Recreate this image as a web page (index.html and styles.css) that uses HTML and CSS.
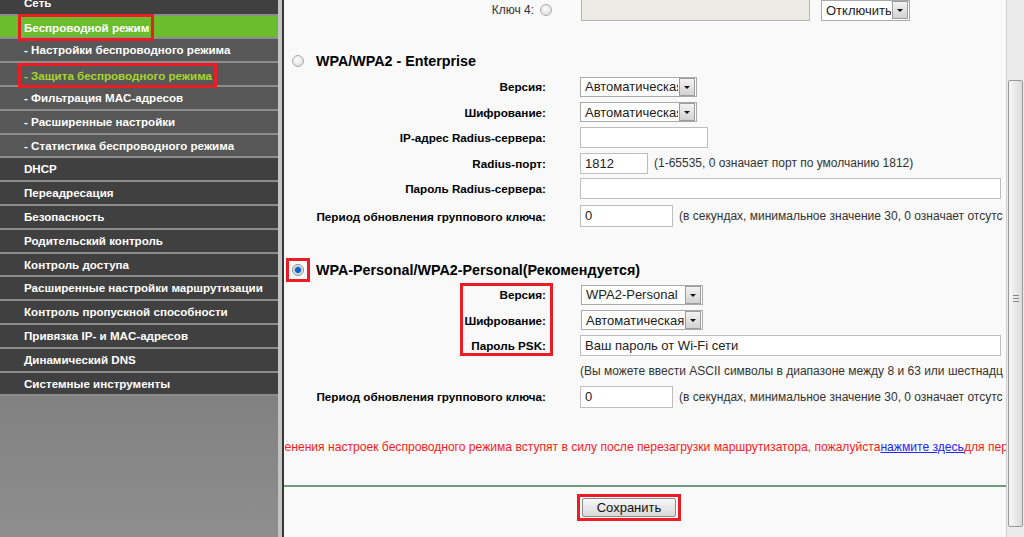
FILE: index.html
```html
<!DOCTYPE html>
<html lang="ru">
<head>
  <meta charset="UTF-8" />
  <title>Защита беспроводного режима</title>
  <link rel="stylesheet" href="styles.css">
</head>
<body>
  <div class="page">
    <nav class="menu">
      <a class="menu-item">Сеть</a>
      <a class="menu-item open"><span class="mark">Беспроводной режим</span></a>
      <a class="menu-item sub">- Настройки беспроводного режима</a>
      <a class="menu-item sub current"><span class="mark mark-sub">- Защита беспроводного режима</span></a>
      <a class="menu-item sub">- Фильтрация MAC-адресов</a>
      <a class="menu-item sub">- Расширенные настройки</a>
      <a class="menu-item sub">- Статистика беспроводного режима</a>
      <a class="menu-item">DHCP</a>
      <a class="menu-item">Переадресация</a>
      <a class="menu-item">Безопасность</a>
      <a class="menu-item">Родительский контроль</a>
      <a class="menu-item">Контроль доступа</a>
      <a class="menu-item">Расширенные настройки маршрутизации</a>
      <a class="menu-item">Контроль пропускной способности</a>
      <a class="menu-item">Привязка IP- и MAC-адресов</a>
      <a class="menu-item">Динамический DNS</a>
      <a class="menu-item">Системные инструменты</a>
    </nav>
    <div class="divider"></div>

    <main class="content">
      <div class="row key-row">
        <div class="label plain">Ключ 4: <span class="radio"></span></div>
        <div class="field">
          <span class="input disabled w-key"></span>
          <span class="select w-off"><span class="val">Отключить</span><span class="arrow"></span></span>
        </div>
      </div>

      <div class="section-title first"><span class="radio"></span>WPA/WPA2 - Enterprise</div>
      <div class="row">
        <div class="label">Версия:</div>
        <div class="field"><span class="select w-ver"><span class="val">Автоматическая</span><span class="arrow"></span></span></div>
      </div>
      <div class="row">
        <div class="label">Шифрование:</div>
        <div class="field"><span class="select w-ver"><span class="val">Автоматическая</span><span class="arrow"></span></span></div>
      </div>
      <div class="row">
        <div class="label">IP-адрес Radius-сервера:</div>
        <div class="field"><span class="input w-ip"></span></div>
      </div>
      <div class="row">
        <div class="label">Radius-порт:</div>
        <div class="field"><span class="input w-port">1812</span><span class="hint">(1-65535, 0 означает порт по умолчанию 1812)</span></div>
      </div>
      <div class="row">
        <div class="label">Пароль Radius-сервера:</div>
        <div class="field"><span class="input w-long"></span></div>
      </div>
      <div class="row period">
        <div class="label">Период обновления группового ключа:</div>
        <div class="field"><span class="input w-period">0</span><span class="hint">(в секундах, минимальное значение 30, 0 означает отсутствие обновления)</span></div>
      </div>

      <div class="section-title second"><span class="mark mark-radio"><span class="radio checked"></span></span>WPA-Personal/WPA2-Personal(Рекомендуется)</div>
      <div class="marked-group">
        <div class="row">
          <div class="label">Версия:</div>
          <div class="field shift"><span class="select w-psk"><span class="val">WPA2-Personal</span><span class="arrow"></span></span></div>
        </div>
        <div class="row">
          <div class="label">Шифрование:</div>
          <div class="field shift"><span class="select w-psk"><span class="val">Автоматическая</span><span class="arrow"></span></span></div>
        </div>
        <div class="row">
          <div class="label">Пароль PSK:</div>
          <div class="field"><span class="input w-long">Ваш пароль от Wi-Fi сети</span></div>
        </div>
      </div>
      <div class="row">
        <div class="label"></div>
        <div class="field"><span class="hint flush">(Вы можете ввести ASCII символы в диапазоне между 8 и 63 или шестнадцатеричные символы в диапазоне между 8 и 64.)</span></div>
      </div>
      <div class="row">
        <div class="label">Период обновления группового ключа:</div>
        <div class="field"><span class="input w-period">0</span><span class="hint">(в секундах, минимальное значение 30, 0 означает отсутствие обновления)</span></div>
      </div>

      <p class="note">Изменения настроек беспроводного режима вступят в силу после перезагрузки маршрутизатора, пожалуйста<a href="#">нажмите здесь</a>для перезагрузки.</p>

      <div class="actions">
        <span class="mark mark-btn"><button class="save">Сохранить</button></span>
      </div>
    </main>

    <div class="scrollbar"><div class="thumb"><span class="grip"></span></div></div>
  </div>
</body>
</html>
```

FILE: styles.css
```css
body {
  margin: 0;
  font-family: 'Liberation Sans', Arial, sans-serif;
  font-size: 12px;
  color: #000;
  background: #f9f9f9;
  overflow: hidden;
}
.page {
  display: flex;
  height: 537px;
  overflow: hidden;
}

/* menu */
.menu {
  width: 278px;
  flex: none;
  background: linear-gradient(#5c5c5c, #8e8e8e);
}
.menu-item {
  display: block;
  height: 21.8px;
  line-height: 21.8px;
  padding-left: 24px;
  border-bottom: 2px solid #8d8d8d;
  background: #404040;
  color: #fff;
  font-weight: bold;
  font-size: 11.6px;
  white-space: nowrap;
  text-decoration: none;
}
.menu-item:first-child { margin-top: -8.2px; }
.menu-item.sub { background: #575757; }
.menu-item.open { background: #6cbd2d; }
.menu-item.current { color: #a7d62c; }

.mark {
  position: relative;
  display: inline-block;
  border: 3px solid #ea1c24;
  padding: 3px 2px 3px 3px;
  margin: -6px 0 -6px -6px;
  line-height: 15px;
  vertical-align: middle;
}
.mark-sub {
  padding: 2px 2px 2px 3px;
  margin: -5px 0 -5px -6px;
}

.divider {
  width: 4px;
  flex: none;
  background: #c4c4c4;
  border-right: 2px solid #363636;
}

/* content */
.content {
  flex: 1;
  min-width: 0;
  overflow: hidden;
  background: #f9f9f9;
}
.row {
  display: flex;
  align-items: center;
  height: 25.5px;
  margin-right: 3px;
  overflow: hidden;
  white-space: nowrap;
}
.label {
  width: 262px;
  flex: none;
  text-align: right;
  font-weight: bold;
  font-size: 11.7px;
}
.label.plain {
  font-weight: normal;
  font-size: 12px;
  color: #333;
  display: flex;
  justify-content: flex-end;
  align-items: center;
  gap: 6px;
  width: 268px;
}
.field {
  display: flex;
  align-items: center;
  margin-left: 34px;
}
.field.shift { margin-left: 35px; }
.key-row {
  margin-top: -1px;
  height: 22px;
}
.key-row .field { margin-left: 29px; }

.section-title {
  display: flex;
  align-items: center;
  height: 24px;
  padding-left: 8px;
  font-weight: bold;
  font-size: 14.3px;
  white-space: nowrap;
}
.section-title .radio { margin-right: 12px; }
.section-title.first { margin-top: 28px; margin-bottom: 1px; }
.section-title.second { margin-top: 29px; padding-left: 2px; }
.mark-radio {
  padding: 3px;
  margin: 0 6px 0 0;
  line-height: 0;
}
.mark-radio .radio { margin: 0; }
.row.period { margin-top: 2px; }

.radio {
  display: inline-block;
  width: 12px;
  height: 12px;
  box-sizing: border-box;
  border-radius: 50%;
  border: 1px solid #ababab;
  background: radial-gradient(circle at 45% 40%, #fdfdfd, #d6d6d6);
}
.radio.checked {
  border-color: #8a8a8a;
  background: radial-gradient(circle, #0d63c8 0 2.5px, #7aa6d6 3.2px, #e9e9e9 4px);
}

.input {
  display: inline-block;
  box-sizing: border-box;
  height: 21px;
  line-height: 19px;
  padding: 0 4px;
  border: 1px solid #bdbdbd;
  background: #fff;
  font-size: 13px;
  color: #222;
}
.input.disabled {
  background: #ecebe6;
  border-color: #b4b4b4;
  height: 22px;
}
.w-key { width: 229px; }
.w-ip { width: 128px; }
.w-port { width: 68px; }
.w-long { width: 421px; }
.w-period { width: 93px; height: 22px; }

.select {
  display: inline-flex;
  align-items: center;
  box-sizing: border-box;
  height: 20px;
  border: 1px solid #a9a9a9;
  background: #fff;
  overflow: hidden;
}
.select .val {
  flex: 1;
  overflow: hidden;
  padding-left: 4px;
  font-size: 13px;
  color: #222;
}
.select .arrow {
  flex: none;
  position: relative;
  width: 14px;
  height: 16px;
  margin: 0 1px;
  border: 1px solid #9c9c9c;
  background: linear-gradient(#f3f3f3, #d2d2d2);
}
.select .arrow::after {
  content: '';
  position: absolute;
  left: 4px;
  top: 7px;
  border-left: 3px solid transparent;
  border-right: 3px solid transparent;
  border-top: 3px solid #111;
}
.w-off { width: 89px; margin-left: 11px; height: 21px; }
.w-ver { width: 117px; }
.w-psk { width: 122px; }

.hint {
  margin-left: 6px;
  color: #333;
}
.hint.flush { margin-left: 0; }

.marked-group { position: relative; }
.marked-group::after {
  content: '';
  position: absolute;
  left: 176px;
  top: 1px;
  width: 87px;
  height: 67px;
  border: 3px solid #ea1c24;
}

.note {
  margin: 29.5px 0 0 -22px;
  line-height: 16px;
  font-size: 12.1px;
  color: #ff1a1a;
  white-space: nowrap;
}
.note a { color: #2424ff; }

.actions {
  margin-top: 30px;
  border-top: 2px solid #6c9e79;
  padding: 7px 0 0 293px;
}
.mark-btn {
  margin: 0;
  padding: 1px 2px;
  line-height: normal;
}
.save {
  display: block;
  width: 94px;
  height: 19px;
  padding: 0;
  border: 1px solid #8c8c8c;
  border-radius: 2px;
  background: linear-gradient(#f7f7f7, #d9d9d9);
  font-family: 'Liberation Sans', Arial, sans-serif;
  font-size: 13px;
  color: #111;
}

/* scrollbar */
.scrollbar {
  width: 17px;
  flex: none;
  border-left: 1px solid #cfcfcf;
  background: #ebebeb;
}
.thumb {
  position: relative;
  margin: 80px 1px 0;
  height: 447px;
  box-sizing: border-box;
  border: 1px solid #999;
  border-radius: 2px;
  background: linear-gradient(90deg, #f6f6f6, #dcdcdc);
}
.grip {
  position: absolute;
  left: 4px;
  top: 214px;
  width: 6px;
  height: 5px;
  border-top: 1px solid #888;
  border-bottom: 1px solid #888;
  background: linear-gradient(#888, #888) center / 100% 1px no-repeat;
}
```
